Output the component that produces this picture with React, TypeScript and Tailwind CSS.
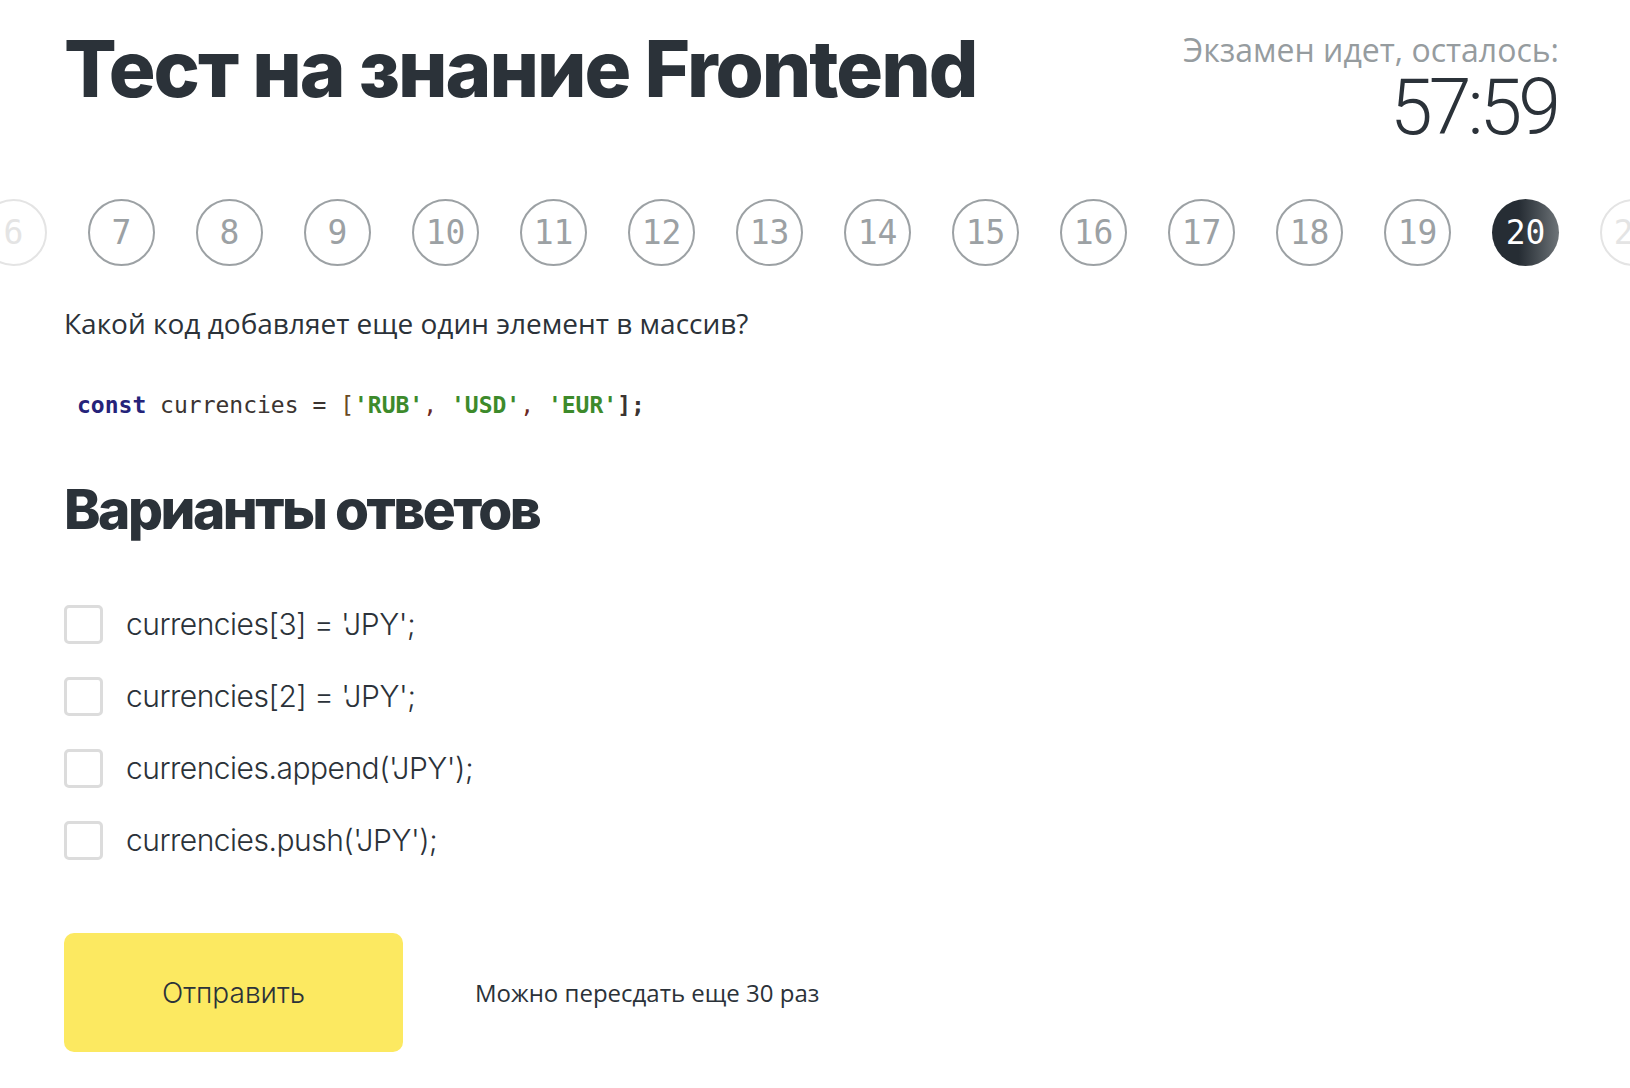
import React from "react";

const nums = [6, 7, 8, 9, 10, 11, 12, 13, 14, 15, 16, 17, 18, 19, 20, 21];
const options = [
  "currencies[3] = 'JPY';",
  "currencies[2] = 'JPY';",
  "currencies.append('JPY');",
  "currencies.push('JPY');",
];

export default function App() {
  return (
    <div className="min-h-screen w-full bg-white text-[#2b3239] overflow-hidden" style={{ fontFamily: "'Open Sans', sans-serif" }}>
      <div className="flex items-start justify-between pl-[64px] pr-[71px] pt-[22px]">
        <h1 className="font-['Inter',sans-serif] text-[78px] font-extrabold leading-none tracking-[-2px] text-[#2b3239] mt-[8px]">
          Тест на знание Frontend
        </h1>
        <div className="flex flex-col items-end">
          <div className="text-[32px] leading-[36px] text-[#969c9f] font-['Open_Sans',sans-serif] mt-[10px]">Экзамен идет, осталось:</div>
          <div className="font-['Roboto',sans-serif] text-[77px] font-light leading-none tracking-[-4px] text-[#2b3239] mr-[2px] mt-[2px]">57:59</div>
        </div>
      </div>

      <div className="mt-[52px] flex gap-[41px] -ml-[20px]">
        {nums.map((n) => {
          const active = n === 20;
          const faded = n === 6 || n === 21;
          return (
            <div
              key={n}
              className={
                "shrink-0 w-[67px] h-[67px] rounded-full flex items-center justify-center font-['DejaVu_Sans_Mono',monospace] text-[33px] " +
                (active
                  ? "bg-gradient-to-r from-[#262d34] from-40% to-[#6e7478] text-white"
                  : faded
                  ? "border-2 border-[#e4e4e4] text-[#e4e4e4]"
                  : "border-2 border-[#9ca1a4] text-[#9ca1a4]")
              }
            >
              {n}
            </div>
          );
        })}
      </div>

      <div className="pl-[64px]">
        <p className="mt-[39px] text-[28px] leading-[36px] text-[#2b3239]">
          Какой код добавляет еще один элемент в массив?
        </p>
        <div className="mt-[49px] ml-[13px] font-['DejaVu_Sans_Mono',monospace] text-[23px] leading-[30px] whitespace-pre">
          <span className="text-[#25237a] font-bold">const</span>
          <span className="text-[#3b3431]"> currencies = </span>
          <span className="text-[#6b4a1f]">[</span>
          <span className="text-[#3d8a2b] font-bold">'RUB'</span>
          <span className="text-[#6b2a1f]">, </span>
          <span className="text-[#3d8a2b] font-bold">'USD'</span>
          <span className="text-[#6b2a1f]">, </span>
          <span className="text-[#3d8a2b] font-bold">'EUR'</span>
          <span className="text-[#3b3431] font-bold">];</span>
        </div>

        <h2 className="mt-[62px] font-['Inter',sans-serif] text-[55px] font-extrabold leading-none tracking-[-2.5px] text-[#2b3239]">
          Варианты ответов
        </h2>

        <div className="mt-[68px] flex flex-col gap-[33px]">
          {options.map((o) => (
            <label key={o} className="flex items-center gap-[23px] h-[39px]">
              <span className="w-[39px] h-[39px] rounded-[5px] border-[3px] border-[#dcdcdc] bg-white shrink-0" />
              <span className="font-['Inter',sans-serif] font-light text-[30px] text-[#2b3239] tracking-[-0.5px]">{o}</span>
            </label>
          ))}
        </div>

        <div className="mt-[73px] flex items-center">
          <button className="w-[339px] h-[119px] rounded-[10px] bg-[#fce961] font-['Inter',sans-serif] font-light text-[28px] text-[#2b3239]">
            Отправить
          </button>
          <span className="ml-[72px] text-[24px] text-[#2b3239]">Можно пересдать еще 30 раз</span>
        </div>
      </div>
    </div>
  );
}
